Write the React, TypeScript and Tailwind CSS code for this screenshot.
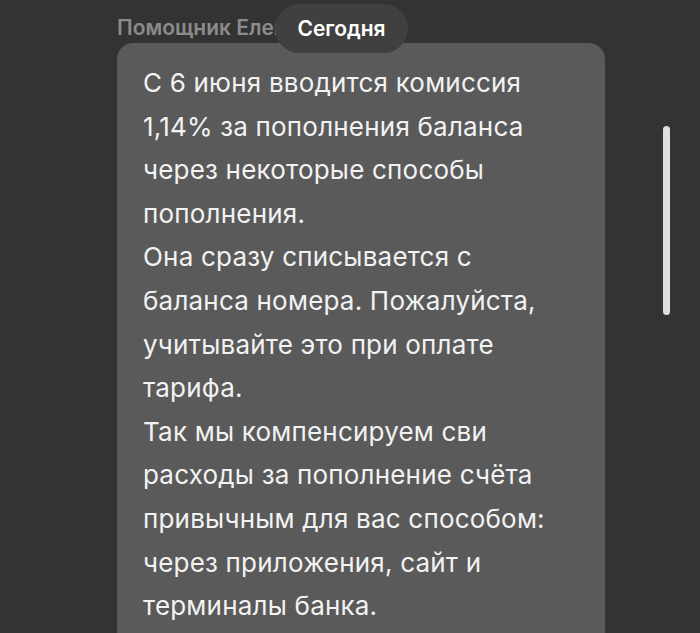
import React from "react";

const lines = [
  "С 6 июня вводится комиссия",
  "1,14% за пополнения баланса",
  "через некоторые способы",
  "пополнения.",
  "Она сразу списывается с",
  "баланса номера. Пожалуйста,",
  "учитывайте это при оплате",
  "тарифа.",
  "Так мы компенсируем сви",
  "расходы за пополнение счёта",
  "привычным для вас способом:",
  "через приложения, сайт и",
  "терминалы банка.",
];

export default function App() {
  return (
    <div
      className="relative h-[633px] w-[700px] overflow-hidden bg-[#333333]"
      style={{ fontFamily: "Inter, Roboto, sans-serif" }}
    >
      {/* Sender name */}
      <div className="pl-[117px] pt-[14px] text-[21px] font-semibold leading-[28px] text-[#8b8b8b] whitespace-nowrap">
        Помощник Елена
      </div>

      {/* Message bubble */}
      <div className="ml-[117px] mt-[1px] w-[488px] rounded-[16px] bg-[#5a5a5a] pl-[26px] pt-[18px] pb-10">
        {lines.map((l) => (
          <div key={l} className="whitespace-nowrap text-[26px] leading-[43.6px] tracking-[0.2px] text-[#f2f2f2]">
            {l}
          </div>
        ))}
      </div>

      {/* Date pill overlay */}
      <div className="absolute left-[275px] top-[4px] flex h-[49px] w-[133px] items-center justify-center rounded-full bg-[#404040] text-[21px] font-semibold text-white">
        Сегодня
      </div>

      {/* Scrollbar */}
      <div className="absolute left-[663px] top-[126px] h-[189px] w-[7px] rounded-full bg-[#dedede]" />
    </div>
  );
}
